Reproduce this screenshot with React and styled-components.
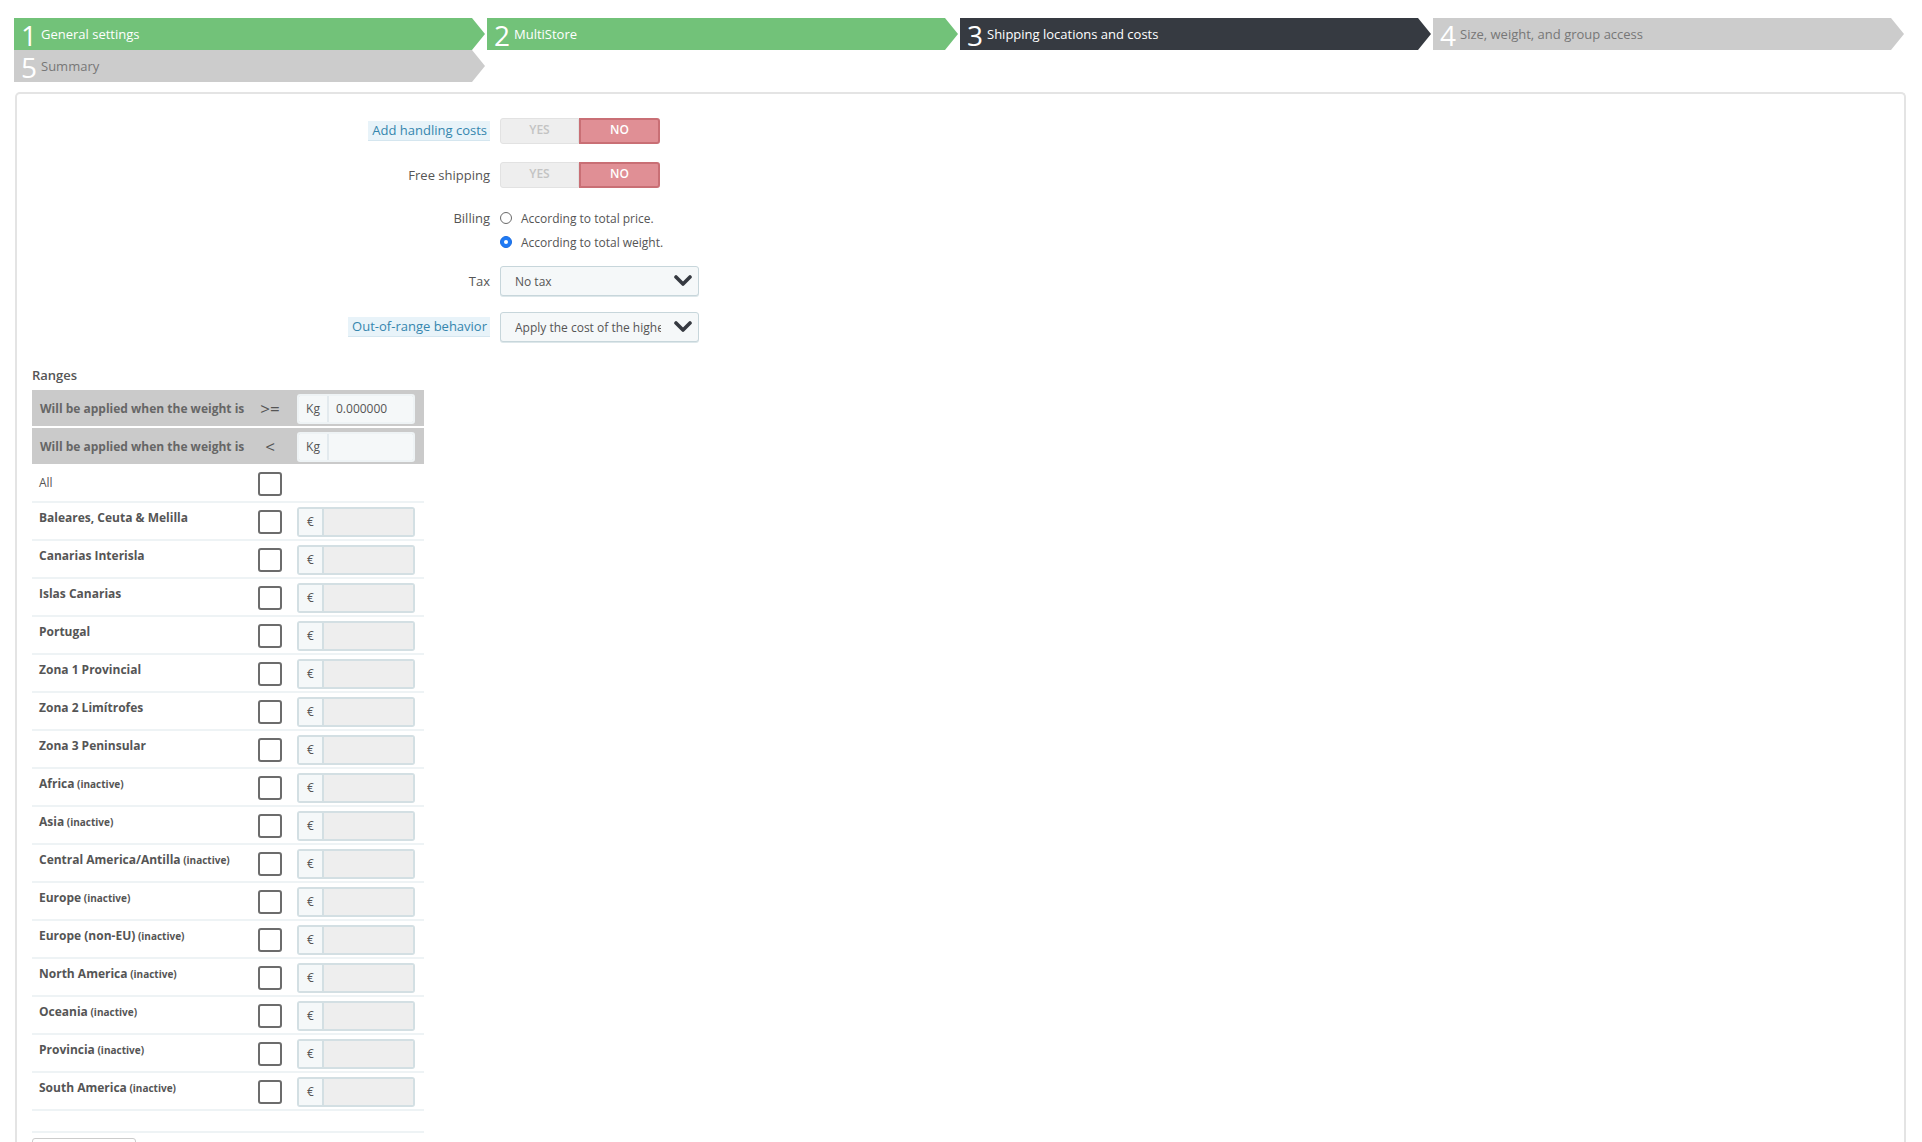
import React from 'react'
import styled, { createGlobalStyle } from 'styled-components'

const GlobalStyle = createGlobalStyle`
  html, body {
    margin: 0;
    padding: 0;
    background: #fff;
    font-family: "Open Sans", "Liberation Sans", sans-serif;
    font-size: 12px;
    color: #555;
  }
  * { box-sizing: border-box; }
`

const steps = [
  { num: 1, label: 'General settings', state: 'done' },
  { num: 2, label: 'MultiStore', state: 'done' },
  { num: 3, label: 'Shipping locations and costs', state: 'current' },
  { num: 4, label: 'Size, weight, and group access', state: 'todo' },
  { num: 5, label: 'Summary', state: 'todo' },
]

const zones = [
  { name: 'Baleares, Ceuta & Melilla' },
  { name: 'Canarias Interisla' },
  { name: 'Islas Canarias' },
  { name: 'Portugal' },
  { name: 'Zona 1 Provincial' },
  { name: 'Zona 2 Limítrofes' },
  { name: 'Zona 3 Peninsular' },
  { name: 'Africa', inactive: true },
  { name: 'Asia', inactive: true },
  { name: 'Central America/Antilla', inactive: true },
  { name: 'Europe', inactive: true },
  { name: 'Europe (non-EU)', inactive: true },
  { name: 'North America', inactive: true },
  { name: 'Oceania', inactive: true },
  { name: 'Provincia', inactive: true },
  { name: 'South America', inactive: true },
]

const stepColors = {
  done: { bg: '#72c279', text: '#fff' },
  current: { bg: '#363a41', text: '#fff' },
  todo: { bg: '#cccccc', text: '#777' },
}

function Chevron() {
  return (
    <svg width="18" height="12" viewBox="0 0 18 12">
      <polyline points="2,2 9,9 16,2" fill="none" stroke="#363a41" strokeWidth="3.6" strokeLinecap="round" strokeLinejoin="round" />
    </svg>
  )
}

function App() {
  return (
    <Page>
      <GlobalStyle />
      <Steps>
        {steps.map((s) => (
          <Step key={s.num} state={s.state}>
            <StepNum>{s.num}</StepNum>
            <StepLabel state={s.state}>{s.label}</StepLabel>
          </Step>
        ))}
      </Steps>

      <Panel>
        <FormRow mb={18}>
          <Label><Hint>Add handling costs</Hint></Label>
          <Switch>
            <SwitchPart>YES</SwitchPart>
            <SwitchPart active>NO</SwitchPart>
          </Switch>
        </FormRow>

        <FormRow mb={18}>
          <Label>Free shipping</Label>
          <Switch>
            <SwitchPart>YES</SwitchPart>
            <SwitchPart active>NO</SwitchPart>
          </Switch>
        </FormRow>

        <FormRow mb={12}>
          <Label top>Billing</Label>
          <div>
            <RadioLine><Radio />According to total price.</RadioLine>
            <RadioLine><Radio checked />According to total weight.</RadioLine>
          </div>
        </FormRow>

        <FormRow mb={16}>
          <Label>Tax</Label>
          <Select>
            <SelectText>No tax</SelectText>
            <Chevron />
          </Select>
        </FormRow>

        <FormRow mb={24}>
          <Label><Hint>Out-of-range behavior</Hint></Label>
          <Select>
            <SelectText>Apply the cost of the highest defined range</SelectText>
            <Chevron />
          </Select>
        </FormRow>

        <RangesTitle>Ranges</RangesTitle>

        <Table>
          <HeadRow>
            <HeadCell>Will be applied when the weight is</HeadCell>
            <OpCell>&gt;=</OpCell>
            <InputGroup light>
              <Addon light>Kg</Addon>
              <Field light>0.000000</Field>
            </InputGroup>
          </HeadRow>
          <HeadRow>
            <HeadCell>Will be applied when the weight is</HeadCell>
            <OpCell>&lt;</OpCell>
            <InputGroup light>
              <Addon light>Kg</Addon>
              <Field light></Field>
            </InputGroup>
          </HeadRow>
          <AllRow>
            <AllLabel>All</AllLabel>
            <CheckCell><Checkbox /></CheckCell>
            <div />
          </AllRow>
          {zones.map((z) => (
            <ZoneRow key={z.name}>
              <ZoneName>
                {z.name}
                {z.inactive && <Inactive> (inactive)</Inactive>}
              </ZoneName>
              <CheckCell><Checkbox /></CheckCell>
              <InputGroup>
                <Addon>€</Addon>
                <Field disabled />
              </InputGroup>
            </ZoneRow>
          ))}
          <FootRow />
        </Table>
        <AddButton />
      </Panel>
    </Page>
  )
}

const Page = styled.div`
  padding: 18px 16px 0 14px;
  height: 1142px;
  overflow: hidden;
`

const Steps = styled.ul`
  list-style: none;
  margin: 0;
  padding: 0;
  display: grid;
  grid-template-columns: repeat(4, 1fr);
`

const Step = styled.li`
  height: 32px;
  margin-right: 2px;
  display: flex;
  align-items: center;
  background: ${(p) => stepColors[p.state].bg};
  clip-path: polygon(0 0, calc(100% - 13px) 0, 100% 50%, calc(100% - 13px) 100%, 0 100%);
`

const StepNum = styled.span`
  font-size: 28px;
  font-weight: 400;
  line-height: 1;
  color: #fff;
  margin-left: 4px;
  margin-top: 2px;
  width: 22px;
  text-align: center;
`

const StepLabel = styled.span`
  font-size: 13px;
  color: ${(p) => stepColors[p.state].text};
  margin-left: 1px;
  white-space: nowrap;
`

const Panel = styled.div`
  margin: 10px 0 0 1px;
  border: 2px solid #e4e4e4;
  border-bottom: none;
  border-radius: 5px 5px 0 0;
  padding: 24px 15px 0 15px;
  min-height: 1100px;
`

const FormRow = styled.div`
  display: grid;
  grid-template-columns: 458px auto;
  column-gap: 10px;
  align-items: center;
  margin-bottom: ${(p) => p.mb}px;
  justify-content: start;
`

const Label = styled.div`
  text-align: right;
  font-size: 13px;
  color: #555;
  align-self: ${(p) => (p.top ? 'start' : 'center')};
  padding-top: ${(p) => (p.top ? '3px' : '0')};
`

const Hint = styled.span`
  display: inline-block;
  background: #e8f3f9;
  color: #3586ae;
  padding: 0 3px 1px 4px;
  border-bottom: 1px solid #d5e6ef;
  line-height: 18px;
`

const Switch = styled.div`
  display: flex;
  width: 160px;
  height: 26px;
`

const SwitchPart = styled.div`
  flex: 1;
  display: flex;
  align-items: center;
  justify-content: center;
  font-size: 12px;
  font-weight: 600;
  color: ${(p) => (p.active ? '#fff' : '#c3c3c3')};
  background: ${(p) => (p.active ? '#e08f95' : '#eeeeee')};
  border: 1px solid ${(p) => (p.active ? '#c96f75' : '#e2e2e2')};
  border-width: ${(p) => (p.active ? '2px' : '1px')};
  border-radius: ${(p) => (p.active ? '0 3px 3px 0' : '3px 0 0 3px')};
  padding-bottom: 3px;
`

const RadioLine = styled.div`
  display: flex;
  align-items: center;
  height: 24px;
  font-size: 12px;
  color: #555;
`

const Radio = styled.span`
  width: 12px;
  height: 12px;
  border-radius: 50%;
  margin-right: 9px;
  position: relative;
  background: ${(p) => (p.checked ? '#1f7af5' : '#fff')};
  border: ${(p) => (p.checked ? '1px solid #1a6ce0' : '1.5px solid #6a6a6a')};
  &::after {
    content: '';
    display: ${(p) => (p.checked ? 'block' : 'none')};
    position: absolute;
    left: 3px;
    top: 3px;
    width: 4px;
    height: 4px;
    border-radius: 50%;
    background: #fff;
  }
`

const Select = styled.div`
  width: 199px;
  height: 30px;
  display: flex;
  align-items: center;
  justify-content: space-between;
  padding: 0 6px 0 14px;
  background: #f5f8f9;
  border: 1px solid #c7d6db;
  border-radius: 3px;
  box-shadow: 0 1px 0 #dde7ea;
`

const SelectText = styled.span`
  width: 146px;
  overflow: hidden;
  white-space: nowrap;
  font-size: 12px;
  color: #555;
`

const RangesTitle = styled.div`
  font-size: 13px;
  color: #555;
  font-weight: 600;
  margin-bottom: 6px;
  line-height: 18px;
`

const Table = styled.div`
  width: 392px;
`

const rowGrid = `
  display: grid;
  grid-template-columns: 214px 48px 130px;
`

const HeadRow = styled.div`
  ${rowGrid}
  align-items: center;
  height: 36px;
  background: #cacaca;
  margin-bottom: 2px;
  &:nth-child(2) { margin-bottom: 0; }
`

const HeadCell = styled.div`
  padding-left: 8px;
  font-size: 12px;
  font-weight: 700;
  color: #666;
  white-space: nowrap;
`

const OpCell = styled.div`
  text-align: center;
  font-size: 17px;
  color: #555;
`

const AllRow = styled.div`
  ${rowGrid}
  align-items: center;
  height: 39px;
  border-bottom: 2px solid #eef3f5;
`

const AllLabel = styled.div`
  padding-left: 7px;
  font-size: 12px;
  color: #555;
`

const ZoneRow = styled.div`
  ${rowGrid}
  align-items: center;
  height: 38px;
  border-bottom: 2px solid #eef3f5;
`

const ZoneName = styled.div`
  align-self: start;
  padding: 6px 0 0 7px;
  font-size: 12px;
  font-weight: 700;
  color: #555;
  line-height: 18px;
  white-space: nowrap;
`

const Inactive = styled.span`
  font-size: 10px;
`

const CheckCell = styled.div`
  display: flex;
  justify-content: center;
`

const Checkbox = styled.span`
  display: block;
  width: 24px;
  height: 24px;
  border: 2px solid #6c6c6c;
  border-radius: 3px;
  background: #fff;
  margin-top: 2px;
`

const InputGroup = styled.div`
  display: flex;
  width: 118px;
  height: 30px;
  margin-left: 3px;
  border: 2px solid ${(p) => (p.light ? '#eef3f5' : '#d3dfe3')};
  border-radius: 3px;
  overflow: hidden;
  margin-top: 1px;
`

const Addon = styled.div`
  width: ${(p) => (p.light ? '30px' : '25px')};
  display: flex;
  align-items: center;
  justify-content: center;
  font-size: 12px;
  color: #555;
  background: #f5f8f9;
  border-right: 2px solid ${(p) => (p.light ? '#e3eaee' : '#d3dfe3')};
`

const Field = styled.div`
  flex: 1;
  display: flex;
  align-items: center;
  padding-left: 7px;
  font-size: 12px;
  color: #555;
  background: ${(p) => (p.disabled ? '#eeeeee' : '#f5f8f9')};
`

const FootRow = styled.div`
  height: 22px;
  border-bottom: 2px solid #eef3f5;
`

const AddButton = styled.div`
  margin-top: 5px;
  width: 104px;
  height: 30px;
  border: 1px solid #cccccc;
  border-radius: 3px;
  background: #fff;
`

export default App
